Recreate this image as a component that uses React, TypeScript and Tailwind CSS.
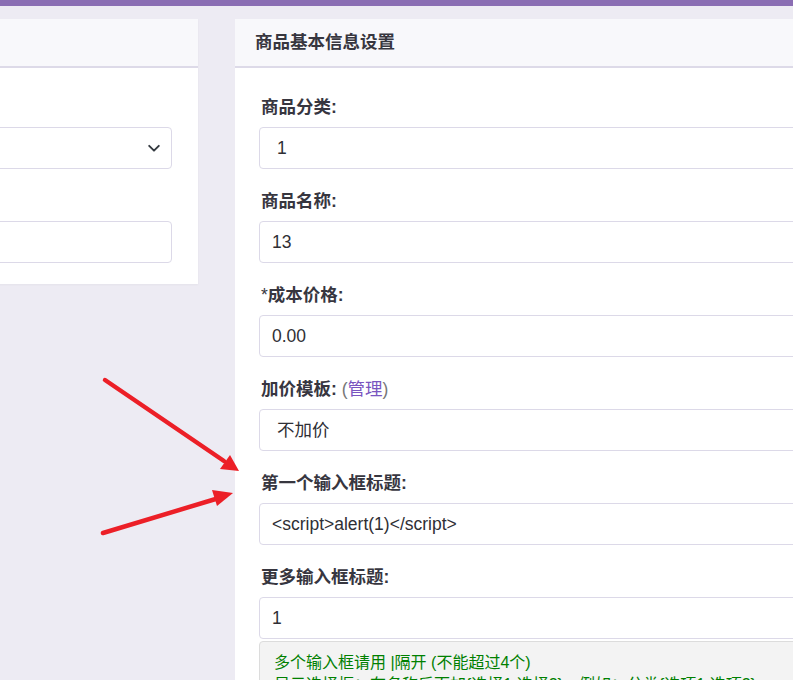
const labelCls =
  "block text-[17.5px] leading-6 font-bold text-[#37363f] mb-2";
const inputCls =
  "h-[42px] w-full rounded-[4px] border border-[#dcd9e8] bg-white flex items-center text-[17.5px] text-[#2f2f35]";

function Field({
  label,
  value,
  pad = "pl-3",
}: {
  label: React.ReactNode;
  value: string;
  pad?: string;
}) {
  return (
    <div className="mb-5">
      <label className={labelCls}>{label}</label>
      <div className={`${inputCls} ${pad}`}>{value}</div>
    </div>
  );
}

function Arrows() {
  return (
    <svg
      className="absolute left-0 top-0 pointer-events-none"
      width="793"
      height="680"
      viewBox="0 0 793 680"
    >
      <g stroke="#ec1f27" strokeWidth="4.5" strokeLinecap="round" fill="none">
        <line x1="105" y1="380" x2="224" y2="461" />
        <line x1="103" y1="533" x2="219" y2="498" />
      </g>
      <g fill="#ec1f27">
        <polygon points="239,471 220,469 230,455" />
        <polygon points="233,493 217,506 212,490" />
      </g>
    </svg>
  );
}

export default function App() {
  return (
    <div
      className="relative h-[680px] w-[793px] overflow-hidden bg-[#edebf3]"
      style={{ fontFamily: '"Liberation Sans", Arial, "Noto Sans CJK SC", sans-serif' }}
    >
      <div className="h-[6px] bg-[#8a6db3]" />
      <div className="flex gap-[37px] pt-[13px]">
        {/* left card, mostly cut off */}
        <div className="ml-[-202px] w-[400px] shrink-0 self-start bg-white shadow-[0_1px_2px_rgba(0,0,0,0.04)]">
          <div className="h-[49px] border-b-2 border-[#dddae8] bg-[#f8f8fb]" />
          <div className="px-[26px] pt-[27px] pb-[21px]">
            <div className="mb-5">
              <div className="h-6 mb-2" />
              <div className={`${inputCls} justify-end pr-2.5`}>
                <svg width="14" height="14" viewBox="0 0 16 16" fill="none">
                  <path
                    d="M2.5 5.5 8 11l5.5-5.5"
                    stroke="#343a40"
                    strokeWidth="2.2"
                    strokeLinecap="round"
                    strokeLinejoin="round"
                  />
                </svg>
              </div>
            </div>
            <div>
              <div className="h-6 mb-2" />
              <div className={inputCls} />
            </div>
          </div>
        </div>

        {/* right card */}
        <div className="w-[600px] shrink-0 bg-white">
          <div className="flex h-[49px] items-center border-b-2 border-[#dddae8] bg-[#f8f8fb] pl-5">
            <h2 className="text-[17.5px] font-bold text-[#37363f]">商品基本信息设置</h2>
          </div>
          <div className="px-6 pt-[27px]">
            <Field label={<span className="pl-0.5">商品分类:</span>} value="1" pad="pl-[17px]" />
            <Field label={<span className="pl-0.5">商品名称:</span>} value="13" />
            <Field
              label={
                <span className="pl-0.5">
                  <span className="font-normal">*</span>成本价格:
                </span>
              }
              value="0.00"
            />
            <Field
              label={
                <span className="pl-0.5">
                  加价模板: <span className="font-normal text-[#777]">(</span>
                  <span className="font-normal text-[#7a55c0]">管理</span>
                  <span className="font-normal text-[#777]">)</span>
                </span>
              }
              value="不加价"
              pad="pl-[17px]"
            />
            <Field
              label={<span className="pl-0.5">第一个输入框标题:</span>}
              value="<script>alert(1)</script>"
            />
            <div>
              <label className={labelCls}>
                <span className="pl-0.5">更多输入框标题:</span>
              </label>
              <div className={`${inputCls} pl-3`}>1</div>
              <div className="mt-0.5 rounded-t-[4px] border border-[#dcdcdc] bg-[#f3f3f3] px-[14px] pt-[10px] pb-3 text-[16px] leading-[22px] text-[#008000]">
                <div>多个输入框请用 |隔开 (不能超过4个)</div>
                <div>显示选择框：在名称后面加{"{"}选择1,选择2{"}"}，例如：分类{"{"}选项1,选项2{"}"}</div>
              </div>
            </div>
          </div>
        </div>
      </div>
      <Arrows />
    </div>
  );
}
